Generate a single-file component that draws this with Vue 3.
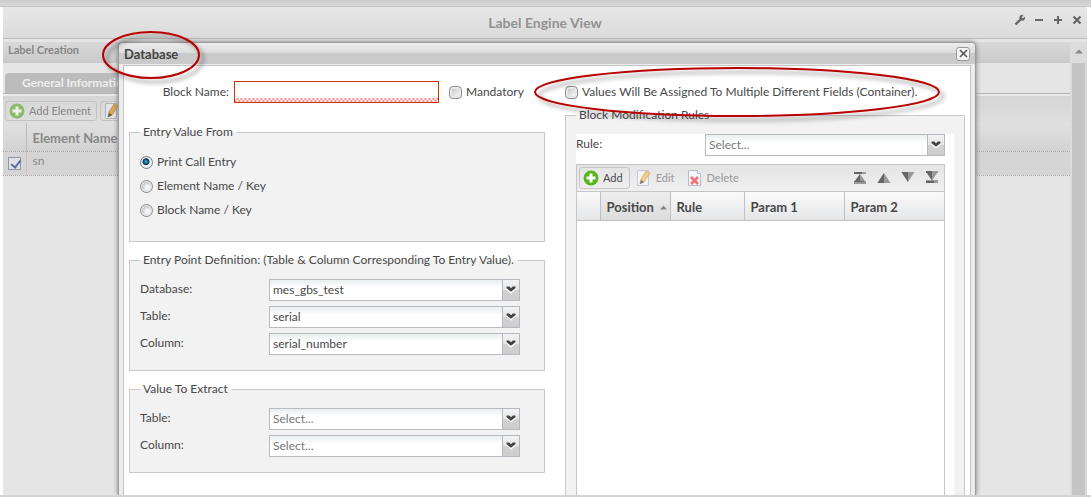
<script setup>
import { ref } from 'vue'

const entryFrom = ref('print')
const entryOptions = [
  { id: 'print', label: 'Print Call Entry' },
  { id: 'element', label: 'Element Name / Key' },
  { id: 'block', label: 'Block Name / Key' }
]
const entryPoint = [
  { id: 'ep-db', label: 'Database:', value: 'mes_gbs_test' },
  { id: 'ep-table', label: 'Table:', value: 'serial' },
  { id: 'ep-column', label: 'Column:', value: 'serial_number' }
]
const extract = [
  { id: 'ex-table', label: 'Table:', value: 'Select...' },
  { id: 'ex-column', label: 'Column:', value: 'Select...' }
]
const elementChecked = ref(true)
</script>

<template>
  <div class="page">
    <div class="strip"></div>
    <header class="titlebar">
      <h1>Label Engine View</h1>
      <div class="tools">
        <button type="button" aria-label="Settings">
          <svg width="12" height="12" viewBox="0 0 12 12"><path d="M1.5 10.5 6.5 5.5" stroke="#666" stroke-width="2.4" /><path d="M9.5 1A3 3 0 0 0 5.400 4.600L7.400 6.600A3 3 0 0 0 11 2.700L9 4.300 7.600 3.500Z" fill="#666" /></svg>
        </button>
        <button type="button" aria-label="Minimize">
          <svg width="12" height="12" viewBox="0 0 12 12"><path d="M2 6h8" stroke="#666" stroke-width="2" /></svg>
        </button>
        <button type="button" aria-label="Maximize">
          <svg width="12" height="12" viewBox="0 0 12 12"><path d="M2 6h8M6 2v8" stroke="#666" stroke-width="2" /></svg>
        </button>
        <button type="button" aria-label="Close">
          <svg width="12" height="12" viewBox="0 0 12 12"><path d="M2.500 2.500l7 7M9.500 2.500l-7 7" stroke="#666" stroke-width="2.2" /></svg>
        </button>
      </div>
    </header>

    <main class="workspace">
      <section class="creation">
        <h2>Label Creation</h2>
        <nav class="tabs"><button type="button" class="tab">General Information</button></nav>
        <div class="toolbar">
          <button type="button" class="boxed">
            <svg width="16" height="16" viewBox="0 0 16 16"><circle cx="8" cy="8" r="7.500" fill="#8dbb6a" /><path d="M8 3.500v9M3.500 8h9" stroke="#eee" stroke-width="3" /></svg>
            Add Element
          </button>
          <button type="button" class="boxed">
            <svg width="16" height="16" viewBox="0 0 16 16"><path d="M1.500.500h11v15h-11z" fill="#e2e4e8" stroke="#b0b4bc" /><path d="M4 14l1-5 5-8 4 2-6 9z" fill="#dfa94c" stroke="#a9834a" stroke-width=".7" /><path d="M4 14l1-4 3 2z" fill="#555" /></svg>
            Edit Element
          </button>
        </div>
        <table class="elements">
          <thead><tr><th class="tick"></th><th>Element Name</th></tr></thead>
          <tbody>
            <tr>
              <td class="tick"><input v-model="elementChecked" type="checkbox" aria-label="Select sn" /></td>
              <td>sn</td>
            </tr>
          </tbody>
        </table>
      </section>
      <div class="scroll">
        <svg width="8" height="5" viewBox="0 0 8 5"><path d="M0 4.500 4 .500 8 4.500z" fill="#888" /></svg>
        <div class="thumb"></div>
      </div>
    </main>

    <section class="dialog" role="dialog" aria-labelledby="dlg-title">
      <header>
        <h2 id="dlg-title">Database</h2>
        <button type="button" aria-label="Close dialog">
          <svg width="9" height="9" viewBox="0 0 9 9"><path d="M1 1l7 7M8 1l-7 7" stroke="#555" stroke-width="1.600" /></svg>
        </button>
      </header>
      <form class="body" @submit.prevent>
        <div class="column">
          <div class="row top">
            <label class="blockname" for="block-name">Block Name:</label>
            <input id="block-name" class="text" type="text" />
            <label class="choice"><input type="checkbox" class="box" />Mandatory</label>
          </div>
          <fieldset class="entry">
            <legend>Entry Value From</legend>
            <label v-for="o in entryOptions" :key="o.id" class="choice">
              <input v-model="entryFrom" type="radio" name="entry" :value="o.id" />{{ o.label }}
            </label>
          </fieldset>
          <fieldset class="fields point">
            <legend>Entry Point Definition: (Table &amp; Column Corresponding To Entry Value).</legend>
            <div v-for="f in entryPoint" :key="f.id" class="field">
              <label :for="f.id">{{ f.label }}</label>
              <div class="combo">
                <select :id="f.id"><option>{{ f.value }}</option></select>
                <svg class="trigger" width="18" height="22" viewBox="0 0 18 22"><path d="M4.500 8.500 9 12.500 13.500 8.500" fill="none" stroke="#fff" stroke-width="4" /><path d="M4 7h3l2 2 2-2h3v2L9 13 4 9z" fill="#444" /></svg>
              </div>
            </div>
          </fieldset>
          <fieldset class="fields">
            <legend>Value To Extract</legend>
            <div v-for="f in extract" :key="f.id" class="field">
              <label :for="f.id">{{ f.label }}</label>
              <div class="combo">
                <select :id="f.id" class="empty"><option>{{ f.value }}</option></select>
                <svg class="trigger" width="18" height="22" viewBox="0 0 18 22"><path d="M4.500 8.500 9 12.500 13.500 8.500" fill="none" stroke="#fff" stroke-width="4" /><path d="M4 7h3l2 2 2-2h3v2L9 13 4 9z" fill="#444" /></svg>
              </div>
            </div>
          </fieldset>
        </div>

        <div class="column">
          <div class="row assign">
            <label class="choice"><input type="checkbox" class="box" />Values Will Be Assigned To Multiple Different Fields (Container).</label>
          </div>
          <fieldset class="rules">
            <legend>Block Modification Rules</legend>
            <div class="sheet">
              <div class="field">
                <label for="rule">Rule:</label>
                <div class="combo">
                  <select id="rule" class="empty"><option>Select...</option></select>
                  <svg class="trigger" width="18" height="22" viewBox="0 0 18 22"><path d="M4.500 8.500 9 12.500 13.500 8.500" fill="none" stroke="#fff" stroke-width="4" /><path d="M4 7h3l2 2 2-2h3v2L9 13 4 9z" fill="#444" /></svg>
                </div>
              </div>
              <div class="grid">
                <div class="gridbar">
                  <button type="button" class="add">
                    <svg width="16" height="16" viewBox="0 0 16 16"><circle cx="8" cy="8" r="7.500" fill="#55b51c" /><path d="M8 3.500v9M3.500 8h9" stroke="#fff" stroke-width="3" /></svg>
                    Add
                  </button>
                  <button type="button" disabled>
                    <svg width="16" height="16" viewBox="0 0 16 16"><path d="M1.500.500h11v15h-11z" fill="#f1f3f8" stroke="#c5cbd8" /><path d="M4 14l1-5 5-8 4 2-6 9z" fill="#f6cd7c" stroke="#c4a676" stroke-width=".7" /><path d="M4 14l1-4 3 2z" fill="#777" /></svg>
                    Edit
                  </button>
                  <button type="button" disabled>
                    <svg width="16" height="16" viewBox="0 0 16 16"><path d="M1.500.500h9l3 3v12h-12z" fill="#f3f5f9" stroke="#b6bccb" /><path d="M10.500.500v3h3" fill="#fff" stroke="#b6bccb" /><path d="M4 7l7 7M11 7l-7 7" stroke="#f07070" stroke-width="2.600" /></svg>
                    Delete
                  </button>
                  <div class="movers">
                    <button type="button" aria-label="Move to top"><svg width="14" height="14" viewBox="0 0 14 14"><path d="M1 1h12v2H1zM7 3l5 7h1v3H1v-3h1z" fill="#999" /><path d="M7 3v7h4v1H1v-1h1zM1 1h8v2H1z" fill="#666" /></svg></button>
                    <button type="button" aria-label="Move up"><svg width="14" height="14" viewBox="0 0 14 14"><path d="M7 2 13.500 12H.500z" fill="#999" /><path d="M7 2v10H.500z" fill="#666" /></svg></button>
                    <button type="button" aria-label="Move down"><svg width="14" height="14" viewBox="0 0 14 14"><path d="M7 11 13.500 1H.500z" fill="#999" /><path d="M7 11V1H.500z" fill="#666" /></svg></button>
                    <button type="button" aria-label="Move to bottom"><svg width="14" height="14" viewBox="0 0 14 14"><path d="M1 0h12v2h-1L8 8v1h5v3H1V9h5V8L2 2H1z" fill="#999" /><path d="M1 0h6v8H6L2 2H1zM1 10h8v2H1z" fill="#666" /></svg></button>
                  </div>
                </div>
                <table>
                  <colgroup><col class="c0" /><col class="c1" /><col class="c2" /><col class="c3" /><col class="c3" /></colgroup>
                  <thead>
                    <tr>
                      <th></th>
                      <th class="sorted"><span>Position<svg width="7" height="5" viewBox="0 0 7 5"><path d="M0 4.500 3.500.500 7 4.500z" fill="#888" /></svg></span></th>
                      <th>Rule</th><th>Param 1</th><th>Param 2</th>
                    </tr>
                  </thead>
                </table>
              </div>
            </div>
          </fieldset>
        </div>
      </form>
    </section>

    <svg class="marks" aria-hidden="true">
      <ellipse cx="151" cy="55" rx="48" ry="23" />
      <ellipse cx="737" cy="92" rx="202" ry="24" />
    </svg>
  </div>
</template>

<style>
body { margin: 0; }
</style>

<style scoped>
* { box-sizing: border-box; }
.page {
  position: relative; display: flex; flex-direction: column; height: 100vh; overflow: hidden;
  border-bottom: 2px solid #d4d4d4; background: #fff; color: #484848;
  font: 12px/16px Lato, "Open Sans", sans-serif;
}
h1, h2 { margin: 0; }
button { padding: 0; border: 0; background: none; color: inherit; font: inherit; }
svg { display: block; flex: none; }
.strip { flex: none; height: 7px; background: linear-gradient(#cbcbcb, #d9d9d9); border-bottom: 1px solid #c3c3c3; }
.titlebar {
  flex: none; display: grid; grid-template-columns: 1fr auto 1fr; align-items: center; height: 32px;
  background: linear-gradient(#e7e7e7, #dbdbdb); border: solid #bbb; border-width: 0 0 1px;
  margin: 0 4px 0 3px;
}
.titlebar h1 { grid-column: 2; font-size: 14px; line-height: 18px; color: #929292; }
.tools { justify-self: end; display: flex; gap: 7px; padding: 0 4px 5px 0; }
.workspace { flex: 1; min-height: 0; display: flex; margin: 0 4px 0 3px; padding-top: 3px; background: #e5e5e5; }
.creation { flex: 1; min-width: 0; }
.creation h2 { height: 21px; padding: 0 5px; font-size: 11px; line-height: 15px; color: #868686; background: linear-gradient(#d9d9d9, #cacaca); border-bottom: 1px solid #c6c6c6; }
.tabs { padding: 10px 2px 0; border-bottom: 1px solid #b5b5b5; }
.tab { display: block; height: 20px; padding: 0 17px; border-radius: 4px 4px 0 0; background: #bcbcbc; color: #eee; font-weight: bold; }
.toolbar { display: flex; gap: 3px; height: 29px; padding: 5px 2px 2px; border-top: 2px solid #e9e9e9; background: linear-gradient(#d6d6d6, #dedede); font-size: 11px; }
.boxed { display: flex; align-items: center; gap: 4px; padding: 0 5px 0 3px; border: 1px solid #c2c2c2; border-radius: 3px; color: #868686; }
table { width: 100%; border-collapse: collapse; table-layout: fixed; text-align: left; }
.elements th { height: 28px; padding: 3px 6px 0; border-bottom: 1px dotted #aaa; background: linear-gradient(#e0e0e0, #d2d2d2); color: #888; font-size: 13px; border-left: 1px solid #bbb; }
.elements td { height: 24px; padding: 0 6px 5px; border-bottom: 1px dotted #aaa; background: #d5d5d5; color: #888; border-left: 1px solid #dcbcc0; }
.elements .tick { width: 23px; padding: 1px 5px 0; border-left: 0; }
.elements input {
  display: block; appearance: none; width: 13px; height: 13px; margin: 0; border: 1px solid #91979f;
  background: #dde1e6;
}
.elements input:checked::after {
  content: ""; display: block; width: 4px; height: 8px; margin: 0 4px; border: solid #5b6ba5; border-width: 0 2px 2px 0; transform: rotate(38deg);
}
.scroll { display: flex; flex-direction: column; align-items: center; width: 17px; padding-top: 7px; background: #dcdcdc; }
.thumb { flex: 1; width: 13px; margin-top: 9px; background: #c5c5c5; }

.dialog {
  position: absolute; top: 42px; bottom: 0; left: 118px; right: 115px; display: flex; flex-direction: column;
  padding: 0 4px; border: 1px solid #9b9b9b; border-bottom: 0; border-radius: 5px 5px 0 0; background: #ececec; box-shadow: 0 0 5px #777;
}
.dialog > header {
  flex: none; display: flex; align-items: center; justify-content: space-between; height: 21px; margin-bottom: 1px;
  margin-left: -4px; margin-right: -4px; padding: 0 5px; background: linear-gradient(#ededed, #dcdcdc 10px, #cacaca 10px, #cacaca); border-radius: 4px 4px 0 0;
}
.dialog h2 { font-size: 13px; line-height: 16px; color: #444; }
.dialog > header button { display: grid; place-items: center; width: 14px; height: 14px; border: 1px solid #999; border-radius: 3px; background: #f5f5f5; }
.body {
  flex: 1; min-height: 0; display: grid; grid-template-columns: 26fr 25fr; gap: 20px; padding: 0 5px;
  border: 1px solid #c6c6c6; border-bottom: 0; background: #fff;
}
.column { display: flex; flex-direction: column; min-width: 0; min-height: 0; }
.row { flex: none; display: flex; align-items: center; }
.top { height: 22px; margin: 15px 0 21px; }
.blockname { width: 100px; margin-right: 5px; text-align: right; }
.text {
  width: 205px; height: 22px; margin: 0 10px 0 0; padding: 0 4px; border: 1px solid #c30; outline: 0; font: inherit;
  background: repeating-conic-gradient(#f88 0 25%, #fff 0 50%) bottom / 4px 4px repeat-x #fff;
}
.choice { display: flex; align-items: center; gap: 4px; }
.choice input {
  flex: none; appearance: none; width: 13px; height: 13px; margin: 0; border: 1px solid #8a8d93; border-radius: 50%;
  background: radial-gradient(circle at 60% 60%, #f4f4f4 2px, #ccc 5px); box-shadow: inset 0 0 0 1px #eee;
}
.choice input:checked { background: radial-gradient(circle at 45% 42%, #48c4f0 0, #14587f 2px, #0b3552 3px, #eee 4px); border-color: #6c7f96; }
.choice .box { border-radius: 4px; background: linear-gradient(135deg, #c8c8d0, #f6f6f6) content-box, #e4e4e4; padding: 2px; }
.assign { height: 22px; margin: 15px 0 4px; }
fieldset { min-width: 0; margin: 0 0 10px; padding: 0 10px; border: 1px solid #c8c8c8; background: #f2f2f2; }
legend { padding: 0 4px 0 3px; height: 16px; }
.entry { height: 118px; padding-top: 10px; }
.entry .choice { height: 24px; }
.fields { height: 92px; padding-top: 11px; }
.point { height: 119px; }
.field { display: flex; height: 22px; margin-bottom: 5px; }
.field label { flex: none; width: 129px; line-height: 20px; }
.combo { position: relative; flex: 1; min-width: 0; height: 22px; }
.fields .combo { flex: none; width: 251px; }
select {
  appearance: none; width: 100%; height: 22px; margin: 0; padding: 0 20px 0 3px; border: 1px solid #b9bcbe; border-radius: 0;
  background: linear-gradient(#eaeeef, #fff 8px); color: #484848; font: inherit;
}
select.empty { color: #777; }
.trigger { position: absolute; top: 0; right: 0; border: 1px solid #b5b8c0; background: linear-gradient(#f3f3f3, #e6e6e6 50%, #d2d2d2 50%, #cdcdcd); pointer-events: none; }
.rules { flex: 1; min-height: 0; display: flex; flex-direction: column; margin: 0; padding-top: 11px; border-bottom: 0; }
.sheet { flex: 1; min-height: 0; display: flex; flex-direction: column; height: 100%; padding-right: 9px; background: #fff; }
.sheet .field { flex: none; margin-bottom: 8px; }
.grid { flex: 1; border: 1px solid #c6c6c6; border-bottom: 0; }
.gridbar { display: flex; align-items: center; gap: 3px; height: 27px; padding: 2px; background: linear-gradient(#e4e4e4, #f0f0f0); border-bottom: 1px solid #c6c6c6; font-size: 11px; }
.gridbar button { display: flex; align-items: center; gap: 4px; height: 22px; padding: 0 3px; }
.gridbar button:disabled { color: #999; padding-right: 6px; }
.gridbar .add { padding: 0 6px 0 3px; border: 1px solid #c6c6c6; border-radius: 3px; }
.movers { display: flex; gap: 4px; margin-left: auto; }
.grid th { height: 28px; padding: 3px 5px 0 6px; border-bottom: 1px solid #c0c0c0; border-right: 1px solid #c0c0c0; background: linear-gradient(#fafafa, #e5e6e8); font-size: 13px; }
.grid th:last-child { border-right: 0; }
.grid th.sorted { background: linear-gradient(#ededed, #dcdcdc); padding-right: 3px; }
.sorted span { display: flex; align-items: center; justify-content: space-between; }
.c0 { width: 23px; } .c1 { width: 70px; } .c2 { width: 74px; } .c3 { width: 100px; }
.marks { position: absolute; inset: 0; width: 100%; height: 100%; pointer-events: none; filter: drop-shadow(4px 4px 2px #0006); }
.marks ellipse { fill: none; stroke: #b90000; stroke-width: 2px; }
</style>
